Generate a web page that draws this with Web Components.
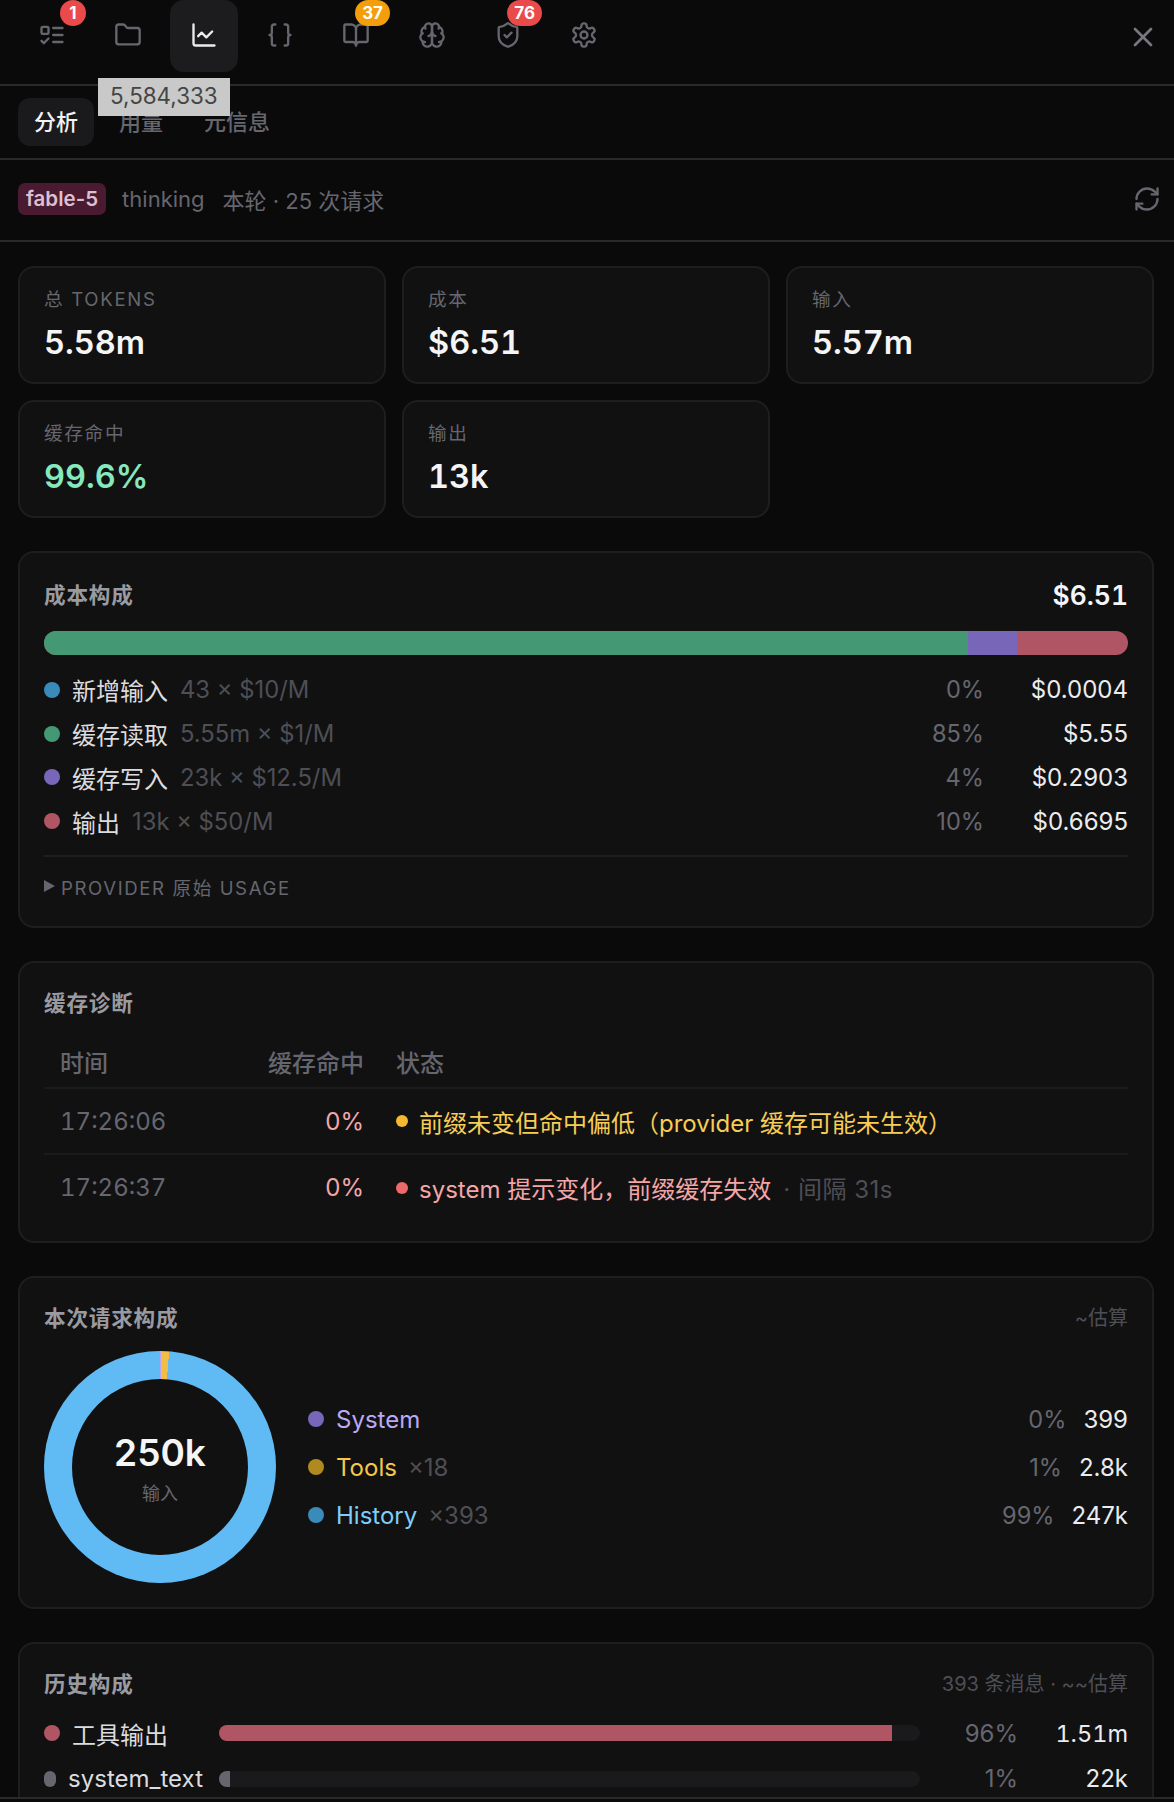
<!DOCTYPE html>
<html lang="zh">
<head>
<meta charset="utf-8">
<title>分析</title>
<style>
html, body { margin: 0; height: 100%; overflow: hidden; background: #0a0a0b; }
body { font-family: Inter, "Noto Sans CJK SC", sans-serif; color: #e8e8ea; }
</style>
</head>
<body>
<analytics-app></analytics-app>
<script>
const ICONS = {
  tasks: '<rect x="3" y="5" width="6" height="6" rx="1"/><path d="m3 17 2 2 4-4"/><path d="M13 6h8"/><path d="M13 12h8"/><path d="M13 18h8"/>',
  folder: '<path d="M20 20a2 2 0 0 0 2-2V8a2 2 0 0 0-2-2h-7.9a2 2 0 0 1-1.69-.9L9.6 3.9A2 2 0 0 0 7.93 3H4a2 2 0 0 0-2 2v13a2 2 0 0 0 2 2Z"/>',
  chart: '<path d="M3 3v16a2 2 0 0 0 2 2h16"/><path d="m19 9-5 5-4-4-3 3"/>',
  braces: '<path d="M8 3H7a2 2 0 0 0-2 2v5a2 2 0 0 1-2 2 2 2 0 0 1 2 2v5c0 1.1.9 2 2 2h1"/><path d="M16 21h1a2 2 0 0 0 2-2v-5c0-1.1.9-2 2-2a2 2 0 0 1-2-2V5a2 2 0 0 0-2-2h-1"/>',
  book: '<path d="M12 7v14"/><path d="M3 18a1 1 0 0 1-1-1V4a1 1 0 0 1 1-1h5a4 4 0 0 1 4 4 4 4 0 0 1 4-4h5a1 1 0 0 1 1 1v13a1 1 0 0 1-1 1h-6a3 3 0 0 0-3 3 3 3 0 0 0-3-3z"/>',
  brain: '<path d="M12 5a3 3 0 1 0-5.997.125 4 4 0 0 0-2.526 5.77 4 4 0 0 0 .556 6.588A4 4 0 1 0 12 18Z"/><path d="M12 5a3 3 0 1 1 5.997.125 4 4 0 0 1 2.526 5.77 4 4 0 0 1-.556 6.588A4 4 0 1 1 12 18Z"/><path d="M15 13a4.5 4.5 0 0 1-3-4 4.5 4.5 0 0 1-3 4"/><path d="M17.599 6.5a3 3 0 0 0 .399-1.375"/><path d="M6.003 5.125A3 3 0 0 0 6.401 6.5"/><path d="M3.477 10.896a4 4 0 0 1 .585-.396"/><path d="M19.938 10.5a4 4 0 0 1 .585.396"/><path d="M6 18a4 4 0 0 1-1.967-.516"/><path d="M19.967 17.484A4 4 0 0 1 18 18"/>',
  shield: '<path d="M20 13c0 5-3.5 7.5-7.66 8.95a1 1 0 0 1-.67-.01C7.5 20.5 4 18 4 13V6a1 1 0 0 1 1-1c2 0 4.5-1.2 6.24-2.72a1.17 1.17 0 0 1 1.52 0C14.51 3.81 17 5 19 5a1 1 0 0 1 1 1z"/><path d="m9 12 2 2 4-4"/>',
  gear: '<path d="M12.22 2h-.44a2 2 0 0 0-2 2v.18a2 2 0 0 1-1 1.73l-.43.25a2 2 0 0 1-2 0l-.15-.08a2 2 0 0 0-2.73.73l-.22.38a2 2 0 0 0 .73 2.73l.15.1a2 2 0 0 1 1 1.72v.51a2 2 0 0 1-1 1.74l-.15.09a2 2 0 0 0-.73 2.73l.22.38a2 2 0 0 0 2.73.73l.15-.08a2 2 0 0 1 2 0l.43.25a2 2 0 0 1 1 1.73V20a2 2 0 0 0 2 2h.44a2 2 0 0 0 2-2v-.18a2 2 0 0 1 1-1.73l.43-.25a2 2 0 0 1 2 0l.15.08a2 2 0 0 0 2.73-.73l.22-.39a2 2 0 0 0-.73-2.73l-.15-.08a2 2 0 0 1-1-1.74v-.5a2 2 0 0 1 1-1.74l.15-.09a2 2 0 0 0 .73-2.73l-.22-.38a2 2 0 0 0-2.73-.73l-.15.08a2 2 0 0 1-2 0l-.43-.25a2 2 0 0 1-1-1.73V4a2 2 0 0 0-2-2z"/><circle cx="12" cy="12" r="3"/>',
  close: '<path d="M18 6 6 18"/><path d="m6 6 12 12"/>',
  refresh: '<path d="M3 12a9 9 0 0 1 9-9 9.75 9.75 0 0 1 6.74 2.74L21 8"/><path d="M21 3v5h-5"/><path d="M21 12a9 9 0 0 1-9 9 9.75 9.75 0 0 1-6.74-2.74L3 16"/><path d="M8 16H3v5"/>'
};

const attr = (el, name, fallback = '') => el.getAttribute(name) ?? fallback;

class LineIcon extends HTMLElement {
  connectedCallback() {
    const size = attr(this, 'size', '28');
    this.attachShadow({ mode: 'open' }).innerHTML = `
      <style>:host{display:flex;width:${size}px;height:${size}px}svg{display:block}</style>
      <svg width="${size}" height="${size}" viewBox="0 0 24 24" fill="none" stroke="currentColor" stroke-width="${attr(this, 'stroke', '2')}" stroke-linecap="round" stroke-linejoin="round">${ICONS[attr(this, 'name')]}</svg>`;
  }
}

class IconTab extends HTMLElement {
  connectedCallback() {
    const badge = attr(this, 'badge');
    this.attachShadow({ mode: 'open' }).innerHTML = `
      <style>
        :host{display:flex;position:relative;width:68px;height:72px;align-items:center;justify-content:center;border-radius:14px;color:#66666e}
        :host([active]){background:#1c1c1e;color:#ececee}
        line-icon{margin-top:-2px}
        .badge{position:absolute;top:0;right:0;height:26px;min-width:26px;box-sizing:border-box;padding:0 7px;border-radius:13px;
          background:${attr(this, 'badge-color', '#ea4a4a')};color:#fff;font-size:17px;font-weight:700;line-height:26px;text-align:center}
      </style>
      <line-icon name="${attr(this, 'icon')}"></line-icon>
      ${badge ? `<span class="badge">${badge}</span>` : ''}`;
  }
}

class TopBar extends HTMLElement {
  connectedCallback() {
    this.attachShadow({ mode: 'open' }).innerHTML = `
      <style>
        :host{display:flex;height:84px;box-sizing:content-box;align-items:flex-start;gap:8px;padding-left:18px;padding-right:15px;border-bottom:2px solid #2a2a2d}
        .close{margin-left:auto;margin-top:21px;color:#77777e}
      </style>
      <slot></slot>
      <line-icon class="close" name="close" size="32"></line-icon>`;
  }
}

class SubTabs extends HTMLElement {
  connectedCallback() {
    this.attachShadow({ mode: 'open' }).innerHTML = `
      <style>
        :host{display:flex;position:relative;gap:9px;align-items:flex-start;padding:12px 0 0 18px;box-sizing:border-box;border-bottom:2px solid #2a2a2d;height:74px;font-size:22px;font-weight:500}
        span{display:block;height:48px;line-height:48px;padding:0 16px;color:#66666e;border-radius:12px}
        .on{background:#1a1a1c;color:#f2f2f3}
        .tip{position:absolute;left:98px;top:-8px;height:38px;line-height:36px;padding:0 12px;border-radius:0;background:#c9c9c9;color:#454545;font-weight:400;font-size:22.4px}
      </style>
      <span class="on">分析</span><span>用量</span><span>元信息</span>
      <span class="tip">5,584,333</span>`;
  }
}

class ModelStrip extends HTMLElement {
  connectedCallback() {
    this.attachShadow({ mode: 'open' }).innerHTML = `
      <style>
        :host{display:flex;height:82px;box-sizing:border-box;align-items:center;padding:0 13px 2px 18px;border-bottom:2px solid #2a2a2d;font-size:22px;color:#66666e}
        .model{height:32px;line-height:32px;padding:0 8px;border-radius:7px;background:#4a1a30;color:#dcc0cf;font-weight:600;font-size:20.5px;margin-right:16px}
        .req{margin-left:18px}
        line-icon{margin-left:auto}
      </style>
      <span class="model">fable-5</span><span>thinking</span><span class="req">本轮 · 25 次请求</span>
      <line-icon name="refresh"></line-icon>`;
  }
}

class StatCard extends HTMLElement {
  connectedCallback() {
    this.attachShadow({ mode: 'open' }).innerHTML = `
      <style>
        :host{display:block;height:118px;box-sizing:border-box;padding:18px 24px 0;border:2px solid #1e1e20;border-radius:16px;background:#111112}
        .l{font-size:18.6px;line-height:26px;letter-spacing:1.7px;color:#66666e}
        .v{font-size:32.5px;line-height:40px;margin-top:11px;font-weight:600;font-variant-numeric:tabular-nums;color:${attr(this, 'tone', '#f5f5f6')}}
      </style>
      <div class="l">${attr(this, 'label')}</div><div class="v">${attr(this, 'value')}</div>`;
  }
}

class PanelCard extends HTMLElement {
  connectedCallback() {
    this.attachShadow({ mode: 'open' }).innerHTML = `
      <style>
        :host{display:block;box-sizing:border-box;padding:23px 24px 24px;border:2px solid #1e1e20;border-radius:16px;background:#111112}
        header{display:flex;justify-content:space-between;align-items:center;min-height:30px}
        .t{font-size:21.6px;font-weight:600;letter-spacing:.8px;color:#9a9aa1}
        ::slotted([slot=aside]){color:#4e4e55;font-size:20px}
      </style>
      <header><span class="t">${attr(this, 'heading')}</span><slot name="aside"></slot></header>
      <slot></slot>`;
  }
}

class CostBar extends HTMLElement {
  connectedCallback() {
    this.attachShadow({ mode: 'open' }).innerHTML = `
      <style>
        :host{display:flex;height:24px;margin:21px 0 13px;border-radius:12px;overflow:hidden;background:#b05563}
        i{display:block}
      </style>
      <i style="width:924px;background:#449873"></i><i style="width:49px;background:#7866b8"></i>`;
  }
}

class CostRow extends HTMLElement {
  connectedCallback() {
    this.attachShadow({ mode: 'open' }).innerHTML = `
      <style>
        :host{display:flex;height:43.8px;align-items:center;font-size:24px}
        .dot{width:16px;height:16px;border-radius:50%;margin-right:12px;background:${attr(this, 'color')};flex:none}
        .n{color:#dcdcdf;font-size:24px}
        .d{margin-left:12px;color:#4e4e55;font-size:23.8px}
        .p{margin-left:auto;color:#66666e;font-size:23.6px}
        .v{width:144px;text-align:right;color:#ececee}
      </style>
      <span class="dot"></span><span class="n">${attr(this, 'label')}</span><span class="d">${attr(this, 'detail')}</span>
      <span class="p">${attr(this, 'pct')}</span><span class="v">${attr(this, 'value')}</span>`;
  }
}

class UsageToggle extends HTMLElement {
  connectedCallback() {
    this.attachShadow({ mode: 'open' }).innerHTML = `
      <style>
        :host{display:flex;align-items:center;gap:6px;margin:12px 0 1px;padding-top:14px;height:30px;border-top:2px solid #1e1e20;font-size:18.6px;letter-spacing:1.6px;color:#66666e}
        i{width:0;height:0;border-left:11px solid #66666e;border-top:6.5px solid transparent;border-bottom:6.5px solid transparent}
      </style>
      <i></i><span><slot></slot></span>`;
  }
}

class DiagTable extends HTMLElement {
  connectedCallback() {
    this.attachShadow({ mode: 'open' }).innerHTML = `
      <style>:host{display:block;margin:18px 0 -3px}</style><slot></slot>`;
  }
}

class DiagRow extends HTMLElement {
  connectedCallback() {
    const head = this.hasAttribute('head');
    const color = attr(this, 'color');
    this.attachShadow({ mode: 'open' }).innerHTML = `
      <style>
        :host{display:grid;box-sizing:border-box;grid-template-columns:208px 128px 1fr;align-items:center;height:${head ? '54px' : '66px'};border-bottom:2px solid #1b1b1d;font-size:24px}
        :host([last]){border-bottom:0;height:65px}
        div{padding:0 16px;white-space:nowrap}
        .t{color:#66666e;${head ? 'font-weight:500' : 'font-variant-numeric:tabular-nums'}}
        .h{text-align:right;color:${head ? '#66666e' : '#f4a6a6'};${head ? 'font-weight:500' : ''}}
        .s{display:flex;align-items:center;color:${head ? '#66666e' : color};${head ? 'font-weight:500' : ''}}
        .dot{width:12px;height:12px;border-radius:50%;margin-right:11px;background:${attr(this, 'dot')}}
        .x{color:#4e4e55;margin-left:12px;letter-spacing:.5px}
      </style>
      <div class="t">${attr(this, 'time')}</div><div class="h">${attr(this, 'hit')}</div>
      <div class="s">${head ? '' : '<span class="dot"></span>'}<span>${attr(this, 'status')}</span>${this.hasAttribute('extra') ? `<span class="x">${attr(this, 'extra')}</span>` : ''}</div>`;
  }
}

class DonutChart extends HTMLElement {
  connectedCallback() {
    this.attachShadow({ mode: 'open' }).innerHTML = `
      <style>
        :host{display:flex;flex:none;width:232px;height:232px;border-radius:50%;align-items:center;justify-content:center;
          background:conic-gradient(#b9a6f2 0 .16%,#f2bd47 .16% 1.25%,#60bbf5 1.25% 100%)}
        .hole{width:176px;height:176px;border-radius:50%;background:#111112;display:flex;flex-direction:column;align-items:center}
        .v{font-size:37px;font-weight:600;line-height:46px;color:#f5f5f6;margin-top:51px}
        .l{font-size:18px;line-height:26px;color:#66666e;margin-top:5px}
      </style>
      <div class="hole"><span class="v">${attr(this, 'value')}</span><span class="l">${attr(this, 'label')}</span></div>`;
  }
}

class LegendRow extends HTMLElement {
  connectedCallback() {
    this.attachShadow({ mode: 'open' }).innerHTML = `
      <style>
        :host{display:flex;height:48px;align-items:center;font-size:24px}
        .dot{width:16px;height:16px;border-radius:50%;margin-right:12px;background:${attr(this, 'dot')}}
        .n{color:${attr(this, 'color')}}
        .d{margin-left:11px;color:#4e4e55}
        .p{margin-left:auto;color:#66666e;font-size:23.6px}
        .v{margin-left:17px;color:#ececee}
      </style>
      <span class="dot"></span><span class="n">${attr(this, 'label')}</span><span class="d">${attr(this, 'detail')}</span>
      <span class="p">${attr(this, 'pct')}</span><span class="v">${attr(this, 'value')}</span>`;
  }
}

class HistoryRow extends HTMLElement {
  connectedCallback() {
    const value = attr(this, 'value');
    this.attachShadow({ mode: 'open' }).innerHTML = `
      <style>
        :host{display:flex;height:45.5px;align-items:center;font-size:24px}
        .name{display:flex;align-items:center;gap:12px;width:159px;flex:none;margin-right:16px}
        .dot{flex:0 1 16px;min-width:0;height:16px;border-radius:8px;background:${attr(this, 'color')}}
        .n{flex:none;color:#dcdcdf}
        .track{flex:none;width:701px;height:16px;border-radius:8px;background:#1a1a1c;overflow:hidden}
        .fill{height:100%;width:${attr(this, 'fill')};background:${attr(this, 'color')}}
        .p{width:98px;flex:none;text-align:right;color:#66666e}
        .v{flex:1;text-align:right;color:#ececee;${value.includes('1') ? 'font-variant-numeric:tabular-nums;font-size:23.5px' : ''}}
      </style>
      <div class="name"><span class="dot"></span><span class="n">${attr(this, 'label')}</span></div>
      <div class="track"><div class="fill"></div></div>
      <span class="p">${attr(this, 'pct')}</span><span class="v">${value}</span>`;
  }
}

class AnalyticsApp extends HTMLElement {
  connectedCallback() {
    this.attachShadow({ mode: 'open' }).innerHTML = `
      <style>
        :host{display:flex;flex-direction:column;height:1802px;overflow:hidden}
        main{flex:1;min-height:0;overflow:hidden;padding:24px 20px 0 18px;display:flex;flex-direction:column;gap:33px}
        .stats{display:grid;grid-template-columns:repeat(3,368px);grid-auto-rows:118px;gap:16px}
        .strip{flex:none;height:3px;border-top:2px solid #2a2a2d}
        .split{display:flex;gap:32px;margin-top:19px;align-items:center}
        .legend{flex:1}
        .hist{margin-top:12.5px}
        panel-card{flex:none}
        .total{font-size:26.4px;line-height:30px;margin-top:4px;font-weight:600;font-variant-numeric:tabular-nums;color:#f5f5f6}
      </style>
      <top-bar>
        <icon-tab icon="tasks" badge="1"></icon-tab>
        <icon-tab icon="folder"></icon-tab>
        <icon-tab icon="chart" active></icon-tab>
        <icon-tab icon="braces"></icon-tab>
        <icon-tab icon="book" badge="37" badge-color="#f59e0b"></icon-tab>
        <icon-tab icon="brain"></icon-tab>
        <icon-tab icon="shield" badge="76"></icon-tab>
        <icon-tab icon="gear"></icon-tab>
      </top-bar>
      <sub-tabs></sub-tabs>
      <model-strip></model-strip>
      <main>
        <div class="stats">
          <stat-card label="总 TOKENS" value="5.58m"></stat-card>
          <stat-card label="成本" value="$6.51"></stat-card>
          <stat-card label="输入" value="5.57m"></stat-card>
          <stat-card label="缓存命中" value="99.6%" tone="#86e8bd"></stat-card>
          <stat-card label="输出" value="13k"></stat-card>
        </div>
        <panel-card heading="成本构成">
          <span slot="aside" class="total">$6.51</span>
          <cost-bar></cost-bar>
          <cost-row color="#3a8aba" label="新增输入" detail="43 × $10/M" pct="0%" value="$0.0004"></cost-row>
          <cost-row color="#449873" label="缓存读取" detail="5.55m × $1/M" pct="85%" value="$5.55"></cost-row>
          <cost-row color="#7866b8" label="缓存写入" detail="23k × $12.5/M" pct="4%" value="$0.2903"></cost-row>
          <cost-row color="#b05563" label="输出" detail="13k × $50/M" pct="10%" value="$0.6695"></cost-row>
          <usage-toggle>PROVIDER 原始 USAGE</usage-toggle>
        </panel-card>
        <panel-card heading="缓存诊断">
          <diag-table>
            <diag-row head time="时间" hit="缓存命中" status="状态"></diag-row>
            <diag-row time="17:26:06" hit="0%" dot="#f5b82e" color="#f7cd55" status="前缀未变但命中偏低（provider 缓存可能未生效）"></diag-row>
            <diag-row last time="17:26:37" hit="0%" dot="#ee6a6a" color="#f4a6a6" status="system 提示变化，前缀缓存失效" extra="· 间隔 31s"></diag-row>
          </diag-table>
        </panel-card>
        <panel-card heading="本次请求构成">
          <span slot="aside">~估算</span>
          <div class="split">
            <donut-chart value="250k" label="输入"></donut-chart>
            <div class="legend">
              <legend-row dot="#7866b8" color="#bba9f4" label="System" pct="0%" value="399"></legend-row>
              <legend-row dot="#b08a1e" color="#f5c84c" label="Tools" detail="×18" pct="1%" value="2.8k"></legend-row>
              <legend-row dot="#3a8aba" color="#7fcdfb" label="History" detail="×393" pct="99%" value="247k"></legend-row>
            </div>
          </div>
        </panel-card>
        <panel-card heading="历史构成">
          <span slot="aside">393 条消息 · ~~估算</span>
          <div class="hist">
            <history-row color="#b05563" label="工具输出" fill="96%" pct="96%" value="1.51m"></history-row>
            <history-row color="#66666e" label="system_text" fill="1.6%" pct="1%" value="22k"></history-row>
          </div>
        </panel-card>
      </main>
      <div class="strip"></div>`;
  }
}

customElements.define('line-icon', LineIcon);
customElements.define('icon-tab', IconTab);
customElements.define('top-bar', TopBar);
customElements.define('sub-tabs', SubTabs);
customElements.define('model-strip', ModelStrip);
customElements.define('stat-card', StatCard);
customElements.define('panel-card', PanelCard);
customElements.define('cost-bar', CostBar);
customElements.define('cost-row', CostRow);
customElements.define('usage-toggle', UsageToggle);
customElements.define('diag-table', DiagTable);
customElements.define('diag-row', DiagRow);
customElements.define('donut-chart', DonutChart);
customElements.define('legend-row', LegendRow);
customElements.define('history-row', HistoryRow);
customElements.define('analytics-app', AnalyticsApp);
</script>
</body>
</html>
